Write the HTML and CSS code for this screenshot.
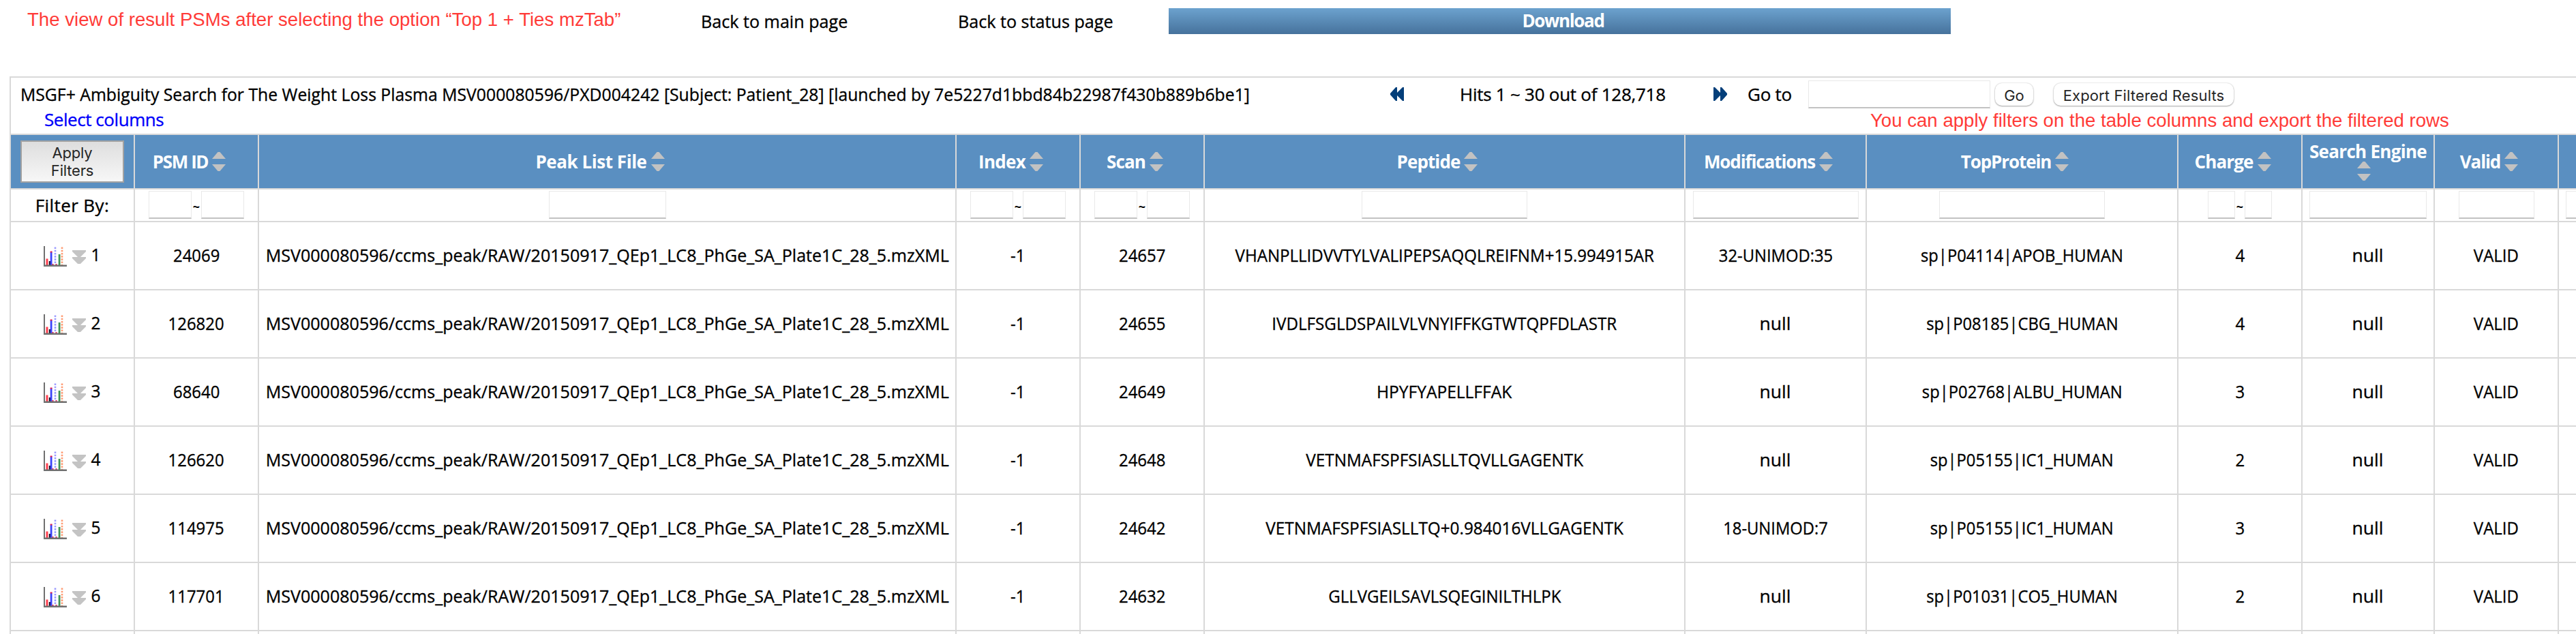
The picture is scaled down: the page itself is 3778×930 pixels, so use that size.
FILE: index.html
```html
<!DOCTYPE html>
<html lang="en">
<head>
<meta charset="utf-8">
<title>Result PSMs</title>
<link rel="stylesheet" href="styles.css">
</head>
<body>
<svg width="0" height="0" class="defs" aria-hidden="true">
  <symbol id="sort" viewBox="0 0 20 28"><path d="M0 10 8.500 0H11.500L20 10ZM0 18H20L11.500 28H8.500Z" fill="#c2c2c2"/></symbol>
  <symbol id="expand" viewBox="0 0 20 20"><path d="M0 0H20V2L12 10H20V12L12 20H8L0 12V10H8L0 2Z" fill="#c4c4c4"/></symbol>
  <symbol id="prev" viewBox="0 0 20 20"><path d="M0 9 8 0H10V8L18 0H20V20H18L10 12V20H8L0 11Z" fill="#043f7a"/></symbol>
  <symbol id="chart" viewBox="0 0 34 30">
    <path d="M3.500 18.500H6.500V28H3.500Z" fill="#fe3f4e"/>
    <path d="M7.800 22H11V28H7.800Z" fill="#111122"/>
    <path d="M9.700 8.500H12.500V28H9.700Z" fill="#3b44fb"/>
    <path d="M9.700 7.500H12.500V9.500H9.700ZM12.500 26H14.500V28H12.500ZM17.500 26H19.500V28H17.500Z" fill="#e4204f"/>
    <path d="M21.700 12H24.500V28H21.700Z" fill="#3c9150"/>
    <path d="M17 1.500V27" stroke="#9c9cff" stroke-width="2.600" stroke-dasharray="2.600 1.600"/>
    <path d="M27 1.500V28" stroke="#ff9c74" stroke-width="2.600" stroke-dasharray="2.600 1.600"/>
    <path d="M0 0H2V27.500H34V30H0Z" fill="#707070"/>
  </symbol>
</svg>

<header class="topbar">
  <div class="note">The view of result PSMs after selecting the option “Top 1 + Ties mzTab”</div>
  <a class="nav main"><span>Back to main page</span></a>
  <a class="nav status"><span>Back to status page</span></a>
  <a class="download">Download</a>
</header>

<main class="results">
  <section class="caption">
    <div class="line">
      <div class="title"><span>MSGF+ Ambiguity Search for The Weight Loss Plasma MSV000080596/PXD004242 [Subject: Patient_28] [launched by 7e5227d1bbd84b22987f430b889b6be1]</span></div>
      <svg class="pager"><use href="#prev"/></svg>
      <div class="hits">Hits 1 ~ 30 out of 128,718</div>
      <svg class="pager next"><use href="#prev"/></svg>
      <div class="goto">Go to</div>
      <input class="page-input" type="text">
      <button class="btn go">Go</button>
      <button class="btn export">Export Filtered Results</button>
    </div>
    <div class="select">Select columns</div>
    <div class="note overlay">You can apply filters on the table columns and export the filtered rows</div>
  </section>

  <div class="row head">
    <div><button class="apply">Apply<br>Filters</button></div>
    <div><span class="h-psm">PSM ID</span><svg class="sort"><use href="#sort"/></svg></div>
    <div><span class="h-file">Peak List File</span><svg class="sort"><use href="#sort"/></svg></div>
    <div><span class="h-index">Index</span><svg class="sort"><use href="#sort"/></svg></div>
    <div><span class="h-scan">Scan</span><svg class="sort"><use href="#sort"/></svg></div>
    <div><span class="h-pep">Peptide</span><svg class="sort"><use href="#sort"/></svg></div>
    <div><span class="h-mod">Modifications</span><svg class="sort"><use href="#sort"/></svg></div>
    <div><span class="h-prot">TopProtein</span><svg class="sort"><use href="#sort"/></svg></div>
    <div><span class="h-charge">Charge</span><svg class="sort"><use href="#sort"/></svg></div>
    <div class="stacked"><span class="h-eng">Search Engine</span><svg class="sort"><use href="#sort"/></svg></div>
    <div><span class="h-valid">Valid</span><svg class="sort"><use href="#sort"/></svg></div>
    <div></div>
  </div>

  <div class="row filter">
    <div class="filter-label">Filter By:</div>
    <div><input class="num"><b>~</b><input class="num"></div>
    <div><input class="mid"></div>
    <div><input class="num"><b>~</b><input class="num"></div>
    <div><input class="num"><b>~</b><input class="num"></div>
    <div><input class="wide"></div>
    <div><input class="wide"></div>
    <div><input class="wide"></div>
    <div><input class="tiny"><b>~</b><input class="tiny"></div>
    <div><input class="mid"></div>
    <div><input class="short"></div>
    <div class="last"><input class="mid"></div>
  </div>

  <div class="row data">
    <div class="tools"><svg class="chart"><use href="#chart"/></svg><svg class="expand"><use href="#expand"/></svg><i>1</i></div>
    <div><span>24069</span></div><div><span class="file">MSV000080596/ccms_peak/RAW/20150917_QEp1_LC8_PhGe_SA_Plate1C_28_5.mzXML</span></div>
    <div><span>-1</span></div><div><span>24657</span></div><div><span class="p1">VHANPLLIDVVTYLVALIPEPSAQQLREIFNM+15.994915AR</span></div>
    <div><span class="mod">32-UNIMOD:35</span></div><div><span class="prot">sp|P04114|APOB_HUMAN</span></div><div><span>4</span></div><div><span class="null">null</span></div><div><span>VALID</span></div><div></div>
  </div>
  <div class="row data">
    <div class="tools"><svg class="chart"><use href="#chart"/></svg><svg class="expand"><use href="#expand"/></svg><i>2</i></div>
    <div><span>126820</span></div><div><span class="file">MSV000080596/ccms_peak/RAW/20150917_QEp1_LC8_PhGe_SA_Plate1C_28_5.mzXML</span></div>
    <div><span>-1</span></div><div><span>24655</span></div><div><span class="p2">IVDLFSGLDSPAILVLVNYIFFKGTWTQPFDLASTR</span></div>
    <div><span class="null">null</span></div><div><span class="prot">sp|P08185|CBG_HUMAN</span></div><div><span>4</span></div><div><span class="null">null</span></div><div><span>VALID</span></div><div></div>
  </div>
  <div class="row data">
    <div class="tools"><svg class="chart"><use href="#chart"/></svg><svg class="expand"><use href="#expand"/></svg><i>3</i></div>
    <div><span>68640</span></div><div><span class="file">MSV000080596/ccms_peak/RAW/20150917_QEp1_LC8_PhGe_SA_Plate1C_28_5.mzXML</span></div>
    <div><span>-1</span></div><div><span>24649</span></div><div><span class="p3">HPYFYAPELLFFAK</span></div>
    <div><span class="null">null</span></div><div><span class="prot">sp|P02768|ALBU_HUMAN</span></div><div><span>3</span></div><div><span class="null">null</span></div><div><span>VALID</span></div><div></div>
  </div>
  <div class="row data">
    <div class="tools"><svg class="chart"><use href="#chart"/></svg><svg class="expand"><use href="#expand"/></svg><i>4</i></div>
    <div><span>126620</span></div><div><span class="file">MSV000080596/ccms_peak/RAW/20150917_QEp1_LC8_PhGe_SA_Plate1C_28_5.mzXML</span></div>
    <div><span>-1</span></div><div><span>24648</span></div><div><span class="p4">VETNMAFSPFSIASLLTQVLLGAGENTK</span></div>
    <div><span class="null">null</span></div><div><span class="prot">sp|P05155|IC1_HUMAN</span></div><div><span>2</span></div><div><span class="null">null</span></div><div><span>VALID</span></div><div></div>
  </div>
  <div class="row data">
    <div class="tools"><svg class="chart"><use href="#chart"/></svg><svg class="expand"><use href="#expand"/></svg><i>5</i></div>
    <div><span>114975</span></div><div><span class="file">MSV000080596/ccms_peak/RAW/20150917_QEp1_LC8_PhGe_SA_Plate1C_28_5.mzXML</span></div>
    <div><span>-1</span></div><div><span>24642</span></div><div><span class="p5">VETNMAFSPFSIASLLTQ+0.984016VLLGAGENTK</span></div>
    <div><span class="mod">18-UNIMOD:7</span></div><div><span class="prot">sp|P05155|IC1_HUMAN</span></div><div><span>3</span></div><div><span class="null">null</span></div><div><span>VALID</span></div><div></div>
  </div>
  <div class="row data">
    <div class="tools"><svg class="chart"><use href="#chart"/></svg><svg class="expand"><use href="#expand"/></svg><i>6</i></div>
    <div><span>117701</span></div><div><span class="file">MSV000080596/ccms_peak/RAW/20150917_QEp1_LC8_PhGe_SA_Plate1C_28_5.mzXML</span></div>
    <div><span>-1</span></div><div><span>24632</span></div><div><span class="p6">GLLVGEILSAVLSQEGINILTHLPK</span></div>
    <div><span class="null">null</span></div><div><span class="prot">sp|P01031|CO5_HUMAN</span></div><div><span>2</span></div><div><span class="null">null</span></div><div><span>VALID</span></div><div></div>
  </div>
  <div class="row cut"><div></div><div></div><div></div><div></div><div></div><div></div><div></div><div></div><div></div><div></div><div></div><div></div></div>
</main>
</body>
</html>
```
FILE: styles.css
```css
* { box-sizing: border-box; }
body {
  margin: 0;
  height: 930px;
  overflow: hidden;
  background: #fff;
  color: #000;
  font: 26px/36px "Open Sans", "Noto Sans", sans-serif;
  white-space: nowrap;
}
.defs { position: absolute; }
svg { display: block; flex: none; }

.topbar {
  display: flex;
  height: 112px;
  padding: 12px 0 0 40px;
}
.note {
  font: 27.6px/34px "Liberation Sans", Arial, sans-serif;
  color: #ff3b38;
}
.topbar .note { width: 988px; }
.nav, .title, .hits, .goto, .select, .filter-label, .data { -webkit-text-stroke: 0.35px currentColor; }
.nav { width: 377px; line-height: 38px; }
.nav span { display: inline-block; transform: scaleX(0.967); transform-origin: left; }
.nav.status { width: 309px; }
.download {
  width: 1147px;
  height: 38px;
  padding-left: 10px;
  background: linear-gradient(#6ca2ce, #46729c);
  color: #fff;
  font-weight: bold;
  line-height: 37px;
  letter-spacing: -1.35px;
  text-align: center;
}

.results { margin-left: 14px; width: 3764px; overflow: hidden; }
.caption {
  position: relative;
  height: 84px;
  border-top: 2px solid #d9d9d9;
  border-left: 2px solid #d9d9d9;
  padding-left: 14px;
}
.line { display: flex; height: 44px; padding-top: 3px; }
.title { width: 2009px; line-height: 43px; }
.title span { display: inline-block; transform: scaleX(0.9525); transform-origin: left; }
.pager { width: 20px; height: 20px; margin-top: 11px; }
.pager.next { transform: scaleX(-1); }
.hits { width: 372px; margin-left: 82px; line-height: 43px; letter-spacing: -0.26px; }
.goto { width: 89px; margin-left: 30px; line-height: 43px; letter-spacing: -0.25px; }
input {
  flex: none;
  height: 41px;
  padding: 0;
  border: 1px solid #e9e9e9;
  border-bottom: 2px solid #c2c2c2;
  background: #fff;
}
.page-input { width: 267px; margin-top: 1px; }
.btn {
  flex: none;
  height: 33px;
  margin-top: 5px;
  padding: 2px 0 0;
  border: 0;
  border-radius: 10px;
  background: #fff;
  box-shadow: 0 1px 2px #a8a8a8, 0 0 2px #c8c8c8;
  color: #262626;
  font: 22px/30px Inter, sans-serif;
  text-align: center;
}
.go { width: 56px; margin-left: 7px; }
.export { width: 264px; margin-left: 30px; letter-spacing: 0.13px; }
.select {
  padding-left: 35px;
  color: #0000fa;
  line-height: 35px;
  letter-spacing: -0.45px;
}
.overlay {
  position: absolute;
  left: 2727px;
  top: 46px;
}

.row {
  display: grid;
  grid-template-columns: 182px 182px 1023px 182px 182px 705px 266px 457px 182px 194px 182px 193px;
  border-top: 2px solid #d9d9d9;
}
.row > div {
  display: flex;
  align-items: center;
  justify-content: center;
  border-left: 2px solid #d9d9d9;
}
.head { height: 80px; color: #fff; font-weight: bold; }
.head > div { background: #5a8fc1; }
.apply {
  width: 152px;
  height: 62px;
  padding: 0;
  border: 2px solid #a2a2a2;
  background: linear-gradient(#dedede, #f7f7f7);
  color: #262626;
  font: 22px/26px Inter, sans-serif;
  letter-spacing: -0.2px;
}
.sort { width: 20px; height: 28px; margin: 0 21px 0 6px; }
.h-psm { letter-spacing: -1.4px; }
.h-file { letter-spacing: -0.45px; }
.h-index { letter-spacing: -0.7px; }
.h-scan { letter-spacing: -0.9px; }
.h-pep { letter-spacing: -0.9px; }
.h-mod { letter-spacing: -1.1px; }
.h-prot { letter-spacing: -1.1px; }
.h-charge { letter-spacing: -0.85px; }
.h-eng { letter-spacing: -0.7px; }
.h-valid { letter-spacing: -1.1px; }
.head .stacked { flex-direction: column; }
.stacked span { line-height: 30px; }
.stacked .sort { margin: 0 13px 2px 0; }

.filter { height: 48px; }
.row > .filter-label { letter-spacing: 0.4px; padding-bottom: 1px; }
.filter input { margin-bottom: 1px; }
.filter b { width: 14px; padding-top: 3px; font-size: 18px; line-height: 20px; text-align: center; }
.num { width: 63px; }
.tiny { width: 40px; }
.short { width: 111px; }
.mid { width: 172px; }
.wide { width: 243px; }
.row > .last { justify-content: flex-start; padding-left: 10px; }

.data { height: 100px; }
.cut { height: 6px; }
.data span { padding-bottom: 2px; transform: scaleX(0.92); }
.data .file { transform: scaleX(0.964); }
.data .null { transform: scaleX(1.02); }
.data .mod { transform: scaleX(0.914); }
.data .prot { transform: scaleX(0.914); }
.data .p1 { transform: scaleX(0.926); }
.data .p2 { transform: scaleX(0.929); }
.data .p3 { transform: scaleX(0.943); }
.data .p4 { transform: scaleX(0.934); }
.data .p5 { transform: scaleX(0.935); }
.data .p6 { transform: scaleX(0.923); }
.row > .tools { justify-content: flex-start; padding-left: 48px; }
.chart { width: 34px; height: 30px; margin-top: 2px; }
.expand { width: 20px; height: 20px; margin: 4px 0 0 8px; }
.tools i {
  margin: 0 0 4px 7px;
  font-style: normal;
  transform: scaleX(0.94);
}
```
